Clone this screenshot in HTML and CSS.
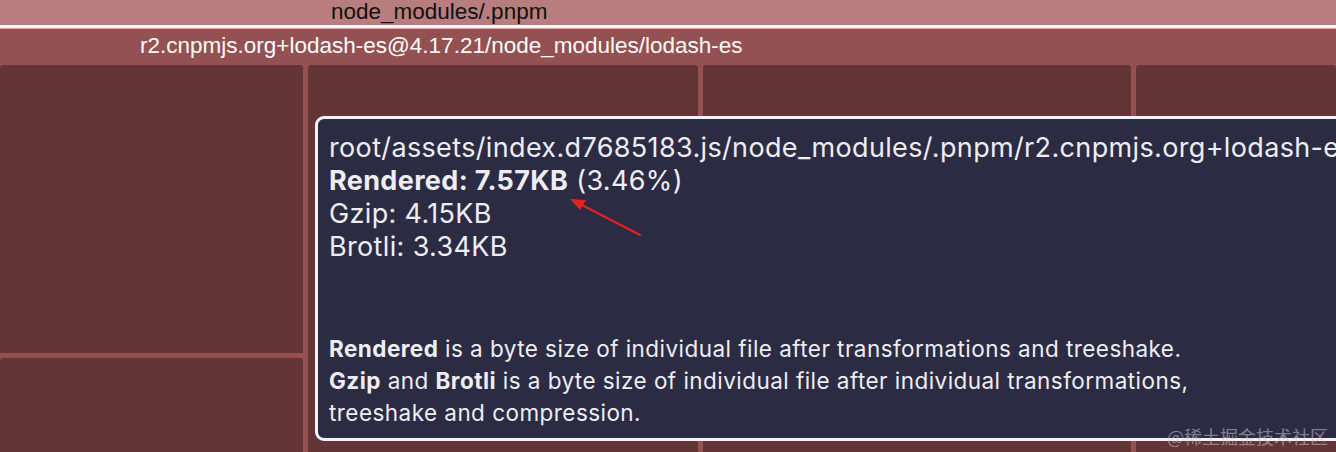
FILE: index.html
```html
<!DOCTYPE html>
<html lang="en">
  <head>
    <meta charset="UTF-8" />
    <title>Bundle treemap</title>
    <link rel="stylesheet" href="styles.css">
  </head>
  <body>
    <div class="treemap">
      <div class="node-top">node_modules/.pnpm</div>
      <div class="rule"></div>
      <div class="node-parent">
        <div class="node-label">r2.cnpmjs.org+lodash-es@4.17.21/node_modules/lodash-es</div>
        <div class="children">
          <div class="column">
            <div class="cell"></div>
            <div class="cell"></div>
          </div>
          <div class="cell"></div>
          <div class="cell"></div>
          <div class="cell"></div>
        </div>
      </div>
    </div>

    <div class="tooltip">
      <div>root/assets/index.d7685183.js/node_modules/.pnpm/r2.cnpmjs.org+lodash-es@4.17.21/node_modules/lodash-es</div>
      <div><b>Rendered: 7.57KB</b> (3.46%)</div>
      <div>Gzip: 4.15KB</div>
      <div>Brotli: 3.34KB</div>
      <p class="note">
        <b>Rendered</b> is a byte size of individual file after transformations and treeshake.<br>
        <b>Gzip</b> and <b>Brotli</b> is a byte size of individual file after individual transformations,<br>
        treeshake and compression.
      </p>
    </div>

    <!-- annotation arrow -->
    <svg class="arrow" width="90" height="50" viewBox="0 0 90 50">
      <line x1="78" y1="44" x2="20" y2="14" stroke="#e3211f" stroke-width="2.2" stroke-linecap="round" />
      <polygon points="8,8 24,9 18,19" fill="#e3211f" />
    </svg>

    <div class="watermark">@稀土掘金技术社区</div>
  </body>
</html>
```

FILE: styles.css
```css
* {
  box-sizing: border-box;
}
body {
  margin: 0;
  height: 452px;
  overflow: hidden;
  position: relative;
  background: #633536;
  font-family: "Liberation Sans", Arial, sans-serif;
}

/* treemap */
.treemap {
  display: flex;
  flex-direction: column;
  height: 452px;
}
.node-top {
  height: 25px;
  background: #b77d7f;
  color: #111;
  font-size: 22.5px;
  line-height: 24px;
  padding-left: 331px;
}
.rule {
  height: 4px;
  background: #fbf7f7;
  border-bottom: 1px solid #d9a9aa;
}
.node-parent {
  flex: 1;
  display: flex;
  flex-direction: column;
  background: #955152;
}
.node-label {
  height: 36px;
  line-height: 34px;
  padding-left: 140px;
  color: #fff;
  font-size: 22.5px;
  white-space: nowrap;
}
.children {
  flex: 1;
  display: grid;
  grid-template-columns: 303px 390px 428px 1fr;
  column-gap: 5px;
}
.column {
  display: grid;
  grid-template-rows: 288px 1fr;
  row-gap: 5px;
}
.cell {
  background: #633536;
  border-radius: 3px 3px 0 0;
}

/* tooltip */
.tooltip {
  position: absolute;
  left: 315px;
  top: 116px;
  width: 1200px;
  height: 325px;
  padding: 12px 11px 9px;
  background: #2b2c43;
  border: 3px solid #f4f4f8;
  border-radius: 9px;
  color: #ededf3;
  font-family: Inter, "Noto Sans", sans-serif;
  font-size: 27px;
  letter-spacing: 0.35px;
  line-height: 33px;
  white-space: nowrap;
}
.tooltip b {
  font-weight: 700;
}
.note {
  margin: 70px 0 0;
  font-size: 22.5px;
  letter-spacing: 0.45px;
  line-height: 32px;
}

.arrow {
  position: absolute;
  left: 562px;
  top: 191px;
}

.watermark {
  position: absolute;
  right: 8px;
  bottom: 6px;
  color: rgba(200, 200, 205, 0.55);
  font-family: "Noto Sans CJK SC", sans-serif;
  font-size: 18px;
  line-height: 20px;
}
```
